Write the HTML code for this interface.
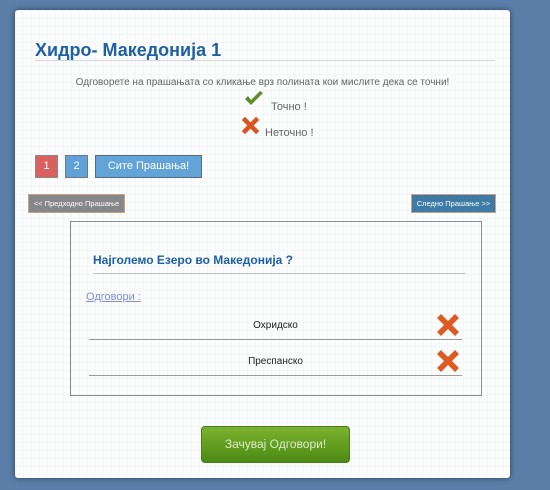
<!DOCTYPE html>
<html><head><meta charset="utf-8"><style>
*{margin:0;padding:0;box-sizing:border-box}
body{width:550px;height:490px;background:#5a7ea8;position:relative;overflow:hidden;font-family:"Liberation Sans","DejaVu Sans",sans-serif}
.panel{position:absolute;left:15px;top:10px;width:495px;height:468px;background:#fbfcfc;border-radius:3px;box-shadow:0 0 6px rgba(0,0,0,.5);
background-image:linear-gradient(#f3f5f6 1px,transparent 1px),linear-gradient(90deg,#f3f5f6 1px,transparent 1px);background-size:8px 8px}
.a{position:absolute}
.t{font-size:11px;color:#666}
</style></head><body>
<div class="panel"></div>
<div class="a" style="left:35px;top:40px;font-size:18px;font-weight:bold;color:#1e5fa6">Хидро- Македонија 1</div>
<div class="a" style="left:35px;top:60px;width:460px;height:1px;background:#d4d6d8"></div>
<div class="a t" style="left:15px;width:495px;top:77px;text-align:center;font-size:10px">Одговорете на прашањата со кликање врз полината кои мислите дека се точни!</div>
<svg class="a" style="left:244px;top:91px" width="20" height="16" viewBox="0 0 20 16"><path d="M1 8 L7 14 L19 2 L16 0 L7 9 L4 5 Z" fill="#5c8e2a"/></svg>
<div class="a t" style="left:271px;top:101px">Точно !</div>
<svg class="a" style="left:241px;top:116px" width="19" height="19" viewBox="0 0 24 24"><path d="M1 5 L5 1 L12 8 L19 1 L23 5 L16 12 L23 19 L19 23 L12 16 L5 23 L1 19 L8 12 Z" fill="#d9531e"/></svg>
<div class="a t" style="left:265px;top:127px">Неточно !</div>
<div class="a" style="left:35px;top:155px;width:23px;height:23px;background:#d9605f;border:1px solid #8a8a8a;color:#fff;font-size:11px;text-align:center;line-height:21px">1</div>
<div class="a" style="left:65px;top:155px;width:23px;height:23px;background:#5fa0d6;border:1px solid #6a7a8a;color:#fff;font-size:11px;text-align:center;line-height:21px">2</div>
<div class="a" style="left:95px;top:155px;width:107px;height:23px;background:#62a3d8;border:1px solid #5a6a7a;color:#fff;font-size:11px;text-align:center;line-height:21px">Сите Прашања!</div>
<div class="a" style="left:28px;top:194px;width:97px;height:19px;background:#858788;border:1px solid #c9a27f;color:#fff;font-size:7.5px;text-align:center;line-height:17px">&lt;&lt; Предходно Прашање</div>
<div class="a" style="left:411px;top:194px;width:85px;height:19px;background:#3e7aa6;border:1px solid #c9a27f;color:#fff;font-size:7.5px;text-align:center;line-height:17px">Следно Прашање &gt;&gt;</div>
<div class="a" style="left:70px;top:221px;width:412px;height:175px;border:1px solid #8c8c8c"></div>
<div class="a" style="left:93px;top:253px;font-size:12px;font-weight:bold;color:#1e5fa6">Најголемо Езеро во Македонија ?</div>
<div class="a" style="left:93px;top:273px;width:372px;height:1px;background:#c4c4c4"></div>
<div class="a" style="left:86px;top:291px;font-size:11px;color:#7c8fd8;text-decoration:underline">Одговори :</div>
<div class="a" style="left:89px;top:320px;width:373px;text-align:center;font-size:10px;color:#222">Охридско</div>
<svg class="a" style="left:436px;top:313px" width="24" height="24" viewBox="0 0 24 24"><path d="M1 5 L5 1 L12 8 L19 1 L23 5 L16 12 L23 19 L19 23 L12 16 L5 23 L1 19 L8 12 Z" fill="#dd5a22"/></svg>
<div class="a" style="left:89px;top:339px;width:373px;height:1px;background:#9a9a9a"></div>
<div class="a" style="left:89px;top:356px;width:373px;text-align:center;font-size:10px;color:#222">Преспанско</div>
<svg class="a" style="left:436px;top:349px" width="24" height="24" viewBox="0 0 24 24"><path d="M1 5 L5 1 L12 8 L19 1 L23 5 L16 12 L23 19 L19 23 L12 16 L5 23 L1 19 L8 12 Z" fill="#dd5a22"/></svg>
<div class="a" style="left:89px;top:375px;width:373px;height:1px;background:#9a9a9a"></div>
<div class="a" style="left:201px;top:426px;width:149px;height:37px;border-radius:4px;background:linear-gradient(#7ab32e,#4d8a14);border:1px solid #4a7a1a;color:#dcebc8;font-size:12px;text-align:center;line-height:35px">Зачувај Одговори!</div>
</body></html>
